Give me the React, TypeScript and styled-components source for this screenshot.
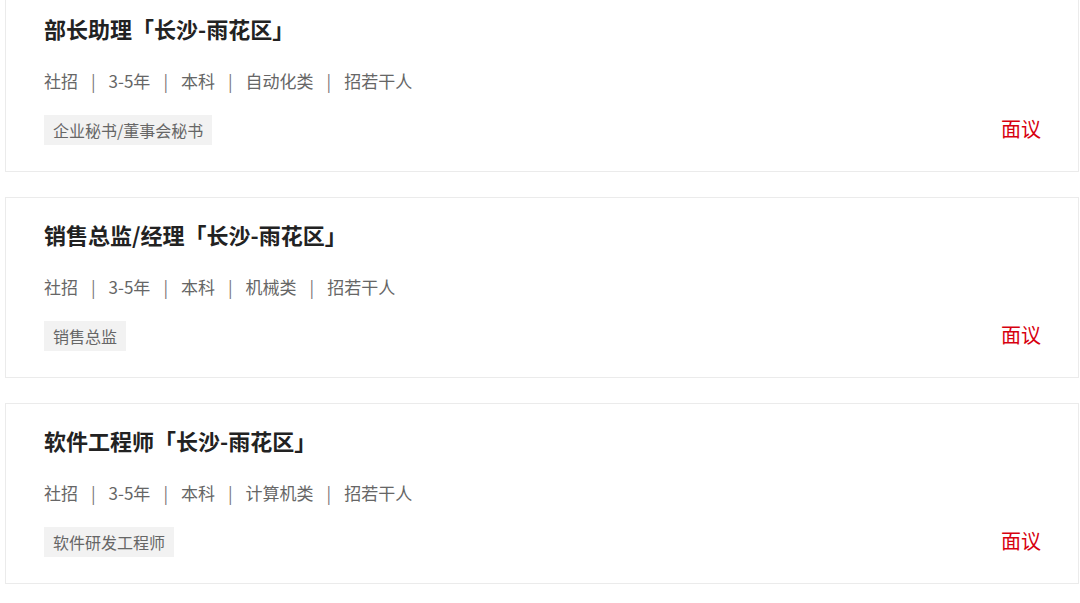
import React from "react";
import styled, { createGlobalStyle } from "styled-components";

const GlobalStyle = createGlobalStyle`
  html, body {
    margin: 0;
    padding: 0;
    background: #ffffff;
    overflow: hidden;
  }
  body {
    font-family: "Noto Sans CJK SC", "Noto Sans", sans-serif;
  }
  * { box-sizing: border-box; }
`;

const List = styled.div`
  display: flex;
  flex-direction: column;
  gap: 25px;
  margin-top: -9px;
  padding: 0 1px 0 5px;
`;

const Card = styled.div`
  height: 181px;
  background: #ffffff;
  border: 1px solid #ebebeb;
  padding: 21px 37px 0 38px;
  display: flex;
  flex-direction: column;
`;

const Title = styled.h3`
  margin: 0;
  font-size: 22px;
  line-height: 30px;
  font-weight: 700;
  color: #222222;
`;

const Meta = styled.div`
  margin-top: 26px;
  display: flex;
  align-items: center;
  font-size: 17px;
  line-height: 24px;
  color: #666666;
`;

const Sep = styled.span`
  margin: 0 13px;
  color: #777777;
`;

const Footer = styled.div`
  margin-top: 22px;
  display: flex;
  align-items: center;
  justify-content: space-between;
`;

const Tag = styled.span`
  display: inline-flex;
  align-items: center;
  height: 30px;
  padding: 0 9px;
  background: #f2f2f2;
  color: #666666;
  font-size: 16px;
`;

const Salary = styled.span`
  font-size: 20px;
  line-height: 26px;
  margin-bottom: 2px;
  color: #d7000f;
`;

type Job = {
  title: string;
  meta: string[];
  tag: string;
  salary: string;
};

const jobs: Job[] = [
  {
    title: "部长助理「长沙-雨花区」",
    meta: ["社招", "3-5年", "本科", "自动化类", "招若干人"],
    tag: "企业秘书/董事会秘书",
    salary: "面议",
  },
  {
    title: "销售总监/经理「长沙-雨花区」",
    meta: ["社招", "3-5年", "本科", "机械类", "招若干人"],
    tag: "销售总监",
    salary: "面议",
  },
  {
    title: "软件工程师「长沙-雨花区」",
    meta: ["社招", "3-5年", "本科", "计算机类", "招若干人"],
    tag: "软件研发工程师",
    salary: "面议",
  },
];

export default function App() {
  return (
    <>
      <GlobalStyle />
      <List>
        {jobs.map((job) => (
          <Card key={job.title}>
            <Title>{job.title}</Title>
            <Meta>
              {job.meta.map((m, i) => (
                <React.Fragment key={m + i}>
                  {i > 0 && <Sep>|</Sep>}
                  <span>{m}</span>
                </React.Fragment>
              ))}
            </Meta>
            <Footer>
              <Tag>{job.tag}</Tag>
              <Salary>{job.salary}</Salary>
            </Footer>
          </Card>
        ))}
      </List>
    </>
  );
}
